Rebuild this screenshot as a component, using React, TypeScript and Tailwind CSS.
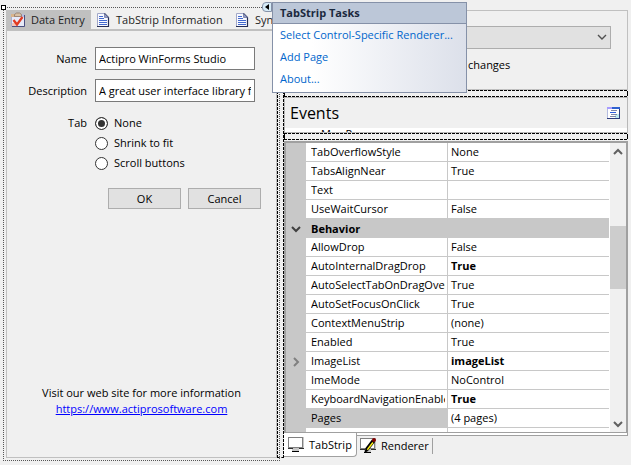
import React from 'react';

type Row = { name: string; value?: string; bold?: boolean; category?: boolean; child?: boolean; selected?: boolean };

const rows: Row[] = [
  { name: 'TabOverflowStyle', value: 'None' },
  { name: 'TabsAlignNear', value: 'True' },
  { name: 'Text', value: '' },
  { name: 'UseWaitCursor', value: 'False' },
  { name: 'Behavior', category: true },
  { name: 'AllowDrop', value: 'False' },
  { name: 'AutoInternalDragDrop', value: 'True', bold: true },
  { name: 'AutoSelectTabOnDragOver', value: 'True' },
  { name: 'AutoSetFocusOnClick', value: 'True' },
  { name: 'ContextMenuStrip', value: '(none)' },
  { name: 'Enabled', value: 'True' },
  { name: 'ImageList', value: 'imageList', bold: true, child: true },
  { name: 'ImeMode', value: 'NoControl' },
  { name: 'KeyboardNavigationEnabled', value: 'True', bold: true },
  { name: 'Pages', value: '(4 pages)', selected: true },
  { name: 'PageValidationEnabled', value: 'False' },
];

function ClipboardIcon() {
  return (
    <svg width="14" height="16" viewBox="0 0 14 16" className="shrink-0" aria-hidden="true">
      <path d="M1 3h12v11H1z" fill="#e6e9f8" />
      <path d="M.5 3.500v11" stroke="#a9aed0" />
      <path d="M1 14.500h12.500V3" fill="none" stroke="#4a4f80" />
      <path d="M0 2h4v3H0z" fill="#d9b48c" />
      <path d="M10 2h3v3h-3z" fill="#b7bde0" />
      <path d="M3.500 4.500V2.500L5.500 1h3l2 1.500v2z" fill="#d8c0a4" stroke="#8c7464" strokeWidth=".8" />
      <path d="M1 11h5v3H1z" fill="#f3c4b8" />
      <path d="M2.500 8l3.500 4.500L11.500 5" fill="none" stroke="#e23a22" strokeWidth="2.300" />
    </svg>
  );
}

function DocIcon() {
  return (
    <svg width="14" height="16" viewBox="0 0 14 16" className="shrink-0" aria-hidden="true">
      <path d="M1.500 1.500h7l4 4v9h-11z" fill="#f8f9ff" />
      <path d="M1.500 14V1.500H9" fill="none" stroke="#a2a8c8" />
      <path d="M1 14.500h11.500V5.500L8.500 1.500" fill="none" stroke="#252d55" strokeWidth="1.200" />
      <path d="M8.500 1.500v4h4z" fill="#8f98c4" stroke="#5b648f" strokeWidth=".6" />
      <path d="M3 4.500h4M3 6.500h5M3 8.500h8M3 10.500h8M3 12.500h8" stroke="#4369cf" />
    </svg>
  );
}

function TabIcon({ pen }: { pen?: boolean }) {
  return (
    <svg width="16" height="16" viewBox="0 0 16 16" className="shrink-0" aria-hidden="true">
      <g shapeRendering="crispEdges">
        <path d="M0 0h16v12h-5v3H4v-3H0z" fill="#c8c8c8" />
        <path d="M.500 .500h14v10H.500z" fill="#fff" stroke="#808080" />
        <path d="M0 11.500h5M11 11.500h5" stroke="#303030" />
        <path d="M4 14.500h7" stroke="#000" />
      </g>
      {pen && (
        <>
          <path d="M4.500 15l1-5L12 1.500l3 2.500-7 9z" fill="#000" />
          <path d="M6.800 11.200L12.300 4l1.200 1-5.600 7.300z" fill="#fff01a" />
          <circle cx="14" cy="2" r="2" fill="#800000" />
        </>
      )}
    </svg>
  );
}

function EventsIcon() {
  return (
    <svg width="13" height="12" viewBox="0 0 13 12" shapeRendering="crispEdges" aria-hidden="true">
      <path d="M0 0h13v12H0z" fill="#2c3c7c" />
      <path d="M0 0h12v11H0z" fill="#b4bce0" />
      <path d="M1 2h11v9H1z" fill="#fff" />
      <path d="M8 7h4v4H8z" fill="#bfe8f0" />
      <path d="M0 0h5v2H0z" fill="#a79cff" />
      <path d="M5 0h8v2H5z" fill="#2e62d0" />
      <path d="M4 3.500h6M4 7.500h6M3 9.500h6" stroke="#8088a8" />
      <path d="M3 5.500h6" stroke="#2e5fe0" />
    </svg>
  );
}

function Chevron({ className, d, thin }: { className: string; d: string; thin?: boolean }) {
  return (
    <svg width="10" height="10" viewBox="0 0 10 10" className={className} fill="none" stroke="currentColor" strokeWidth={thin ? 1.4 : 2} aria-hidden="true">
      <path d={d} />
    </svg>
  );
}

function SplitterBar() {
  return (
    <div className="flex h-[7px] shrink-0 flex-col justify-between">
      <div className="h-px bg-[repeating-linear-gradient(90deg,#000_0_3px,transparent_3px_4px)]" />
      <div className="flex flex-1 justify-between">
        <div className="w-px bg-black" />
        <div className="w-px bg-black" />
      </div>
      <div className="h-px bg-[repeating-linear-gradient(90deg,#000_0_3px,transparent_3px_4px)]" />
    </div>
  );
}

function FormDesigner() {
  return (
    <section className="relative my-[7px] mb-1 ml-[3px] flex w-[277px] shrink-0 border border-dotted border-[#555] p-[2px]">
      <span className="absolute -left-[3px] -top-[3px] size-[5px] border border-black bg-white" />
      <div className="flex min-w-0 flex-1 flex-col">
        <div role="tablist" className="flex h-[19px] shrink-0 overflow-hidden whitespace-nowrap text-[#1e1e1e]">
          <button role="tab" aria-selected="true" className="flex w-[85px] shrink-0 items-center gap-[6px] bg-[#c0c0c0] pl-[5px]">
            <ClipboardIcon />
            Data Entry
          </button>
          <button role="tab" aria-selected="false" className="flex w-[139px] shrink-0 items-center gap-[6px] pl-[5px]">
            <DocIcon />
            TabStrip Information
          </button>
          <button role="tab" aria-selected="false" className="flex shrink-0 items-center gap-[6px] pl-[5px]">
            <DocIcon />
            Syn
          </button>
        </div>
        <form className="flex flex-1 flex-col border border-t-2 border-[#c0c0c0] px-[15px]" onSubmit={(e) => e.preventDefault()}>
          <div className="mt-4 grid grid-cols-[65px_160px] items-center gap-x-2 gap-y-[9px]">
            <label htmlFor="name" className="text-right">Name</label>
            <input id="name" defaultValue="Actipro WinForms Studio" className="h-[23px] border border-[#7a7a7a] bg-white px-[3px]" />
            <label htmlFor="desc" className="text-right">Description</label>
            <input id="desc" defaultValue="A great user interface library for WinForms" className="h-[23px] border border-[#7a7a7a] bg-white px-[3px]" />
          </div>
          <div role="radiogroup" aria-labelledby="tab-label" className="mt-[11px] grid grid-cols-[65px_160px] gap-x-2">
            <span id="tab-label" className="text-right leading-5">Tab</span>
            <div>
              {['None', 'Shrink to fit', 'Scroll buttons'].map((t, i) => (
                <label key={t} className="flex h-5 items-center gap-[6px]">
                  <input
                    type="radio"
                    name="tab"
                    defaultChecked={i === 0}
                    className="size-[13px] appearance-none rounded-full border border-[#333] bg-white checked:bg-[#333] checked:shadow-[inset_0_0_0_2px_white]"
                  />
                  {t}
                </label>
              ))}
            </div>
          </div>
          <div className="mt-[15px] flex justify-end gap-[7px]">
            <button className="h-[21px] w-[73px] border border-[#adadad] bg-[#e1e1e1]">OK</button>
            <button className="h-[21px] w-[73px] border border-[#adadad] bg-[#e1e1e1]">Cancel</button>
          </div>
          <div className="mt-auto pb-10 text-center">
            <p>Visit our web site for more information</p>
            <a href="https://www.actiprosoftware.com" className="text-[#0000ff] underline">https://www.actiprosoftware.com</a>
          </div>
        </form>
      </div>
    </section>
  );
}

function PropertyGrid() {
  return (
    <div className="flex min-h-0 flex-1 overflow-hidden border-2 border-b border-[#a0a0a0] bg-white">
      <div className="min-w-0 flex-1 overflow-hidden">
        <table className="w-full table-fixed border-separate border-spacing-0">
          <colgroup>
            <col className="w-5" />
            <col className="w-[142px]" />
            <col />
          </colgroup>
          <tbody>
            {rows.map((r) =>
              r.category ? (
                <tr key={r.name} className="h-[19px] bg-[#c8c8c8]">
                  <td className="p-0"><Chevron className="ml-[5px] text-[#404040]" d="M1 3l4 4 4-4" /></td>
                  <th colSpan={2} className="p-0 pl-[5px] text-left font-bold leading-[18px]">{r.name}</th>
                </tr>
              ) : (
                <tr key={r.name} className="h-[19px]">
                  <td className="bg-[#c8c8c8] p-0">
                    {r.child && <Chevron className="ml-[5px] text-[#808080]" d="M3 1l4 4-4 4" />}
                  </td>
                  <th className={`border-b border-r border-[#c8c8c8] p-0 pl-[5px] pr-[2px] text-left font-normal leading-[18px] ${r.selected ? 'bg-[#c8c8c8]' : ''}`}>
                    <div className="h-[18px] overflow-hidden whitespace-nowrap">{r.name}</div>
                  </th>
                  <td className={`whitespace-nowrap border-b border-[#c8c8c8] p-0 pl-[3px] leading-[18px] ${r.bold ? 'font-bold' : ''}`}>{r.value}</td>
                </tr>
              ),
            )}
          </tbody>
        </table>
      </div>
      <div className="ml-px flex w-4 shrink-0 flex-col items-center bg-[#f0f0f0] text-[#606060]">
        <Chevron className="mt-1" d="M1 7l4-4 4 4" />
        <div className="mt-[69px] h-[63px] w-full bg-[#cdcdcd]" />
        <Chevron className="mb-[3px] mt-auto" d="M1 3l4 4 4-4" />
      </div>
    </div>
  );
}

function PropertiesPane() {
  return (
    <section className="mr-[3px] flex min-w-0 flex-1 flex-col pb-2 pt-[10px]">
      <div className="h-20 shrink-0 border border-[#c0c0c0] px-4 pt-[15px]">
        <div className="relative">
          <select aria-label="Renderer" className="block h-[23px] w-full appearance-none border border-[#adadad] bg-[#e1e1e1]" />
          <Chevron className="pointer-events-none absolute right-1 top-[6px] text-[#505050]" d="M1 3l4 4 4-4" thin />
        </div>
        <p className="mt-2 pl-[167px]">changes</p>
      </div>
      <SplitterBar />
      <div className="flex h-9 shrink-0 flex-col border border-[#b8b8b8] bg-white">
        <header className="flex h-[30px] shrink-0 items-center justify-between bg-[#f0f0f0] pl-[5px] pr-[7px]">
          <h2 className="text-base">Events</h2>
          <button aria-label="Show event list"><EventsIcon /></button>
        </header>
        <div className="overflow-hidden pl-9 leading-3">Max P</div>
      </div>
      <SplitterBar />
      <div className="mt-px flex min-h-0 flex-1 flex-col">
        <PropertyGrid />
        <div className="flex h-6 shrink-0">
          <button className="flex w-[73px] items-center gap-[5px] rounded-br border-b border-r border-[#a0a0a0] bg-white pl-1">
            <TabIcon />
            TabStrip
          </button>
          <div className="flex flex-1 flex-col">
            <div className="h-[3px] border-b border-r border-[#a0a0a0] bg-white" />
            <button className="mt-[2px] flex h-4 w-[76px] items-center gap-[5px] border-r border-[#a0a0a0] pl-[3px]">
              <TabIcon pen />
              Renderer
            </button>
          </div>
        </div>
      </div>
    </section>
  );
}

function TasksPopup() {
  return (
    <div className="absolute left-[262px] top-[2px] flex items-start">
      <button aria-label="Tasks" className="flex size-[10px] items-center justify-center rounded-l-sm border border-[#8591a8] bg-[#d6ebf7]">
        <svg width="4" height="6" viewBox="0 0 4 6" aria-hidden="true"><path d="M4 0v6L0 3z" fill="#000" /></svg>
      </button>
      <div className="w-[195px] border border-[#8591a8] bg-linear-to-r from-white from-20% to-[#dce0ea]">
        <h3 className="h-[21px] border-b border-[#8591a8] bg-[#bcc7d8] pl-[7px] font-bold leading-5 text-[#1b293e]">TabStrip Tasks</h3>
        <ul className="pb-[2px] pl-[7px] text-[#0066cc]">
          {['Select Control-Specific Renderer...', 'Add Page', 'About...'].map((t) => (
            <li key={t} className="h-[22px] whitespace-nowrap leading-[22px]"><a href="#">{t}</a></li>
          ))}
        </ul>
      </div>
    </div>
  );
}

export default function App() {
  return (
    <main className="relative flex h-screen min-h-[300px] overflow-hidden bg-[#f0f0f0] font-['Open_Sans','Noto_Sans',sans-serif] text-[11px] leading-4 text-black">
      <FormDesigner />
      <div className="relative -ml-[3px] mb-[7px] mt-[7px] flex w-[7px] shrink-0 justify-between border-b border-dashed border-black">
        <div className="w-px bg-[repeating-linear-gradient(180deg,#000_0_3px,transparent_3px_4px)]" />
        <div className="w-px bg-[repeating-linear-gradient(180deg,#000_0_3px,transparent_3px_4px)]" />
      </div>
      <PropertiesPane />
      <TasksPopup />
    </main>
  );
}
